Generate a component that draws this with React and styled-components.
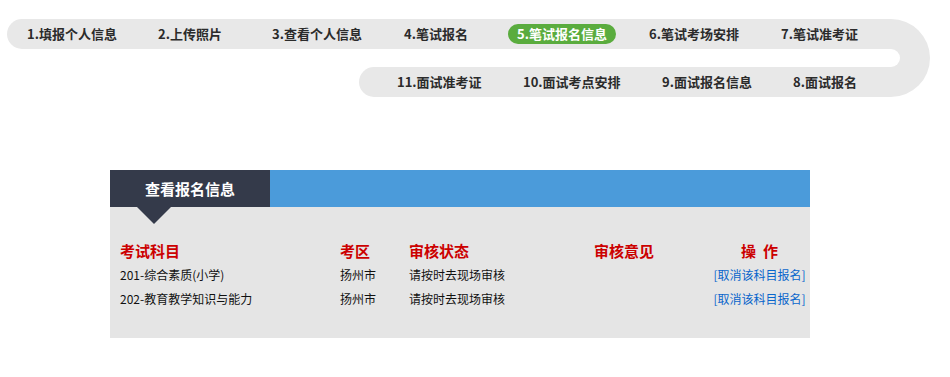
import React from "react";
import styled, { createGlobalStyle } from "styled-components";

const GlobalStyle = createGlobalStyle`
  html, body {
    margin: 0;
    padding: 0;
    background: #fff;
  }
  body {
    font-family: "Noto Sans CJK SC", "Liberation Sans", sans-serif;
    font-size: 12px;
    color: #222;
  }
`;

const topSteps = [
  { label: "1.填报个人信息", w: 131 },
  { label: "2.上传照片", w: 114 },
  { label: "3.查看个人信息", w: 132 },
  { label: "4.笔试报名", w: 113 },
  { label: "5.笔试报名信息", w: 132, active: true },
  { label: "6.笔试考场安排", w: 132 },
  { label: "7.笔试准考证", w: 110 },
];

const bottomSteps = [
  { label: "11.面试准考证", w: 126 },
  { label: "10.面试考点安排", w: 139 },
  { label: "9.面试报名信息", w: 131 },
  { label: "8.面试报名", w: 90 },
];

const rows = [
  { subject: "201-综合素质(小学)", area: "扬州市", status: "请按时去现场审核" },
  { subject: "202-教育教学知识与能力", area: "扬州市", status: "请按时去现场审核" },
];

function App() {
  return (
    <Page>
      <GlobalStyle />
      <Track>
        <Rows>
          <StepRow $indent={11}>
            {topSteps.map((s) => (
              <Step key={s.label} $w={s.w}>
                <StepLabel $active={s.active}>{s.label}</StepLabel>
              </Step>
            ))}
          </StepRow>
          <Gap />
          <StepRow $offset={352} $indent={29}>
            {bottomSteps.map((s) => (
              <Step key={s.label} $w={s.w}>
                <StepLabel>{s.label}</StepLabel>
              </Step>
            ))}
          </StepRow>
        </Rows>
        <Cap />
      </Track>

      <Panel>
        <PanelHead>
          <Tab>查看报名信息</Tab>
        </PanelHead>
        <PanelBody>
          <Table>
            <HeadCell>考试科目</HeadCell>
            <HeadCell>考区</HeadCell>
            <HeadCell>审核状态</HeadCell>
            <HeadCell>审核意见</HeadCell>
            <HeadCell $center>操&nbsp;&nbsp;作</HeadCell>
            {rows.map((r) => (
              <React.Fragment key={r.subject}>
                <Cell>{r.subject}</Cell>
                <Cell>{r.area}</Cell>
                <Cell>{r.status}</Cell>
                <Cell />
                <Cell $center>
                  <CancelLink href="#">[取消该科目报名]</CancelLink>
                </Cell>
              </React.Fragment>
            ))}
          </Table>
        </PanelBody>
      </Panel>
    </Page>
  );
}

const Page = styled.div`
  padding-top: 19px;
  width: 950px;
`;

const Track = styled.div`
  display: flex;
  margin-left: 7px;
`;

const Rows = styled.div`
  display: flex;
  flex-direction: column;
  width: 884px;
`;

const StepRow = styled.div`
  display: flex;
  align-items: center;
  height: 30px;
  margin-left: ${(p) => p.$offset || 0}px;
  padding-left: ${(p) => p.$indent}px;
  background: #e8e8e8;
  border-radius: 15px 0 0 15px;
`;

const Gap = styled.div`
  height: 18px;
`;

const Cap = styled.div`
  width: 9px;
  height: 18px;
  border: 30px solid #e8e8e8;
  border-left: none;
  border-radius: 0 39px 39px 0;
`;

const Step = styled.div`
  flex: none;
  width: ${(p) => p.$w}px;
`;

const StepLabel = styled.span`
  display: inline-block;
  height: 20px;
  line-height: 20px;
  padding: 0 9px;
  border-radius: 10px;
  font-size: 13px;
  font-weight: bold;
  white-space: nowrap;
  color: ${(p) => (p.$active ? "#fff" : "#2b2b2b")};
  background: ${(p) => (p.$active ? "#5aac3e" : "transparent")};
`;

const Panel = styled.div`
  width: 700px;
  margin: 73px 0 0 110px;
`;

const PanelHead = styled.div`
  display: flex;
  height: 37px;
  background: #4b9bda;
`;

const Tab = styled.div`
  position: relative;
  width: 160px;
  background: #343a4a;
  color: #fff;
  font-size: 15px;
  font-weight: bold;
  line-height: 37px;
  text-align: center;

  &::after {
    content: "";
    position: absolute;
    left: 27px;
    top: 37px;
    border-left: 17.5px solid transparent;
    border-right: 17.5px solid transparent;
    border-top: 17px solid #343a4a;
  }
`;

const PanelBody = styled.div`
  height: 131px;
  box-sizing: border-box;
  padding: 31px 0 0 10px;
  background: #e5e5e5;
`;

const Table = styled.div`
  display: grid;
  grid-template-columns: 220px 69px 185px 115px 1fr;
  grid-auto-rows: 24px;
  align-items: center;
`;

const HeadCell = styled.div`
  font-size: 15px;
  font-weight: bold;
  color: #cc0000;
  white-space: nowrap;
  text-align: ${(p) => (p.$center ? "center" : "left")};
`;

const Cell = styled.div`
  font-size: 12px;
  color: #111;
  white-space: nowrap;
  text-align: ${(p) => (p.$center ? "center" : "left")};
`;

const CancelLink = styled.a`
  color: #0a66cc;
  text-decoration: none;
`;

export default App;
